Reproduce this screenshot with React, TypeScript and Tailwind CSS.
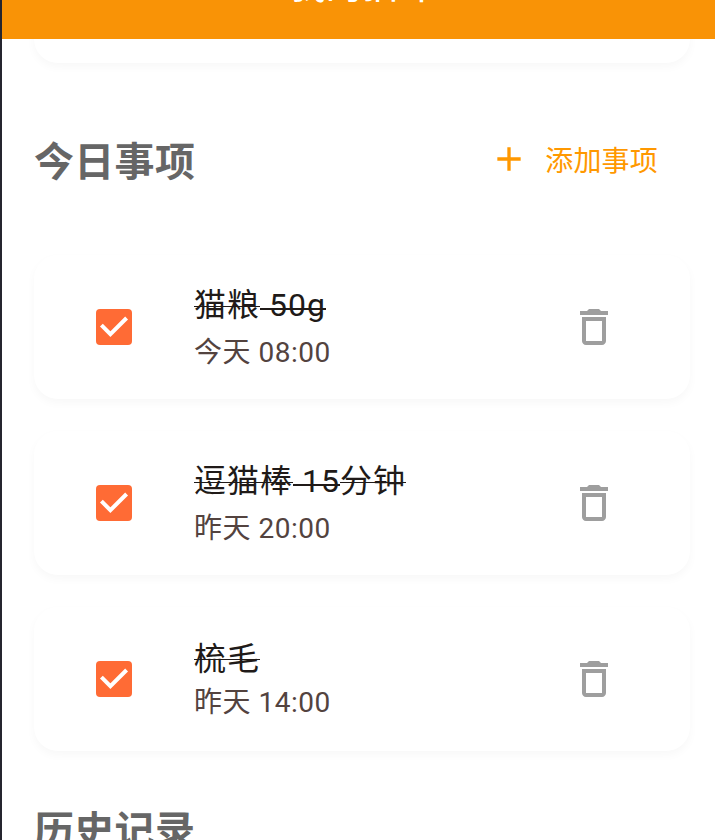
import { MdAdd, MdDeleteOutline } from "react-icons/md";

interface Part {
  text: string;
  latin?: boolean;
}

interface Task {
  title: Part[];
  time: string;
}

const tasks: Task[] = [
  { title: [{ text: "猫粮" }, { text: " 50g", latin: true }], time: "今天 08:00" },
  {
    title: [{ text: "逗猫棒" }, { text: " 15", latin: true }, { text: "分钟" }],
    time: "昨天 20:00",
  },
  { title: [{ text: "梳毛" }], time: "昨天 14:00" },
];

function Checkbox() {
  return (
    <div className="h-9 w-9 shrink-0 rounded-[4px] bg-[#ff6b35]">
      <svg width="36" height="36" viewBox="0 0 36 36" fill="none">
        <path d="M5.4 16.2L14.4 25.2L30.6 9" stroke="#fff" strokeWidth="4" />
      </svg>
    </div>
  );
}

function TaskCard({ task }: { task: Task }) {
  const mixed = task.title.some((part) => part.latin);

  // latin runs carry a thicker, slightly lower strike
  const strikeClass = (part: Part) => {
    if (part.latin) return "top-[27px] h-0.5";
    return mixed ? "top-[25px] h-px" : "top-[24px] h-px";
  };

  return (
    <div className="flex h-36 items-center rounded-3xl bg-white pr-[72px] pl-[62px] shadow-[0_4px_10px_rgba(0,0,0,0.03)]">
      <Checkbox />
      <div className="ml-[62px] h-24 flex-1 whitespace-pre">
        <div
          className={`h-12 text-[32px] leading-[48px] tracking-[1px] text-[#201a18] ${
            mixed ? "mt-0.5" : "mt-1"
          }`}
        >
          {task.title.map((part) => (
            <span key={part.text} className="relative inline-block">
              {part.text}
              <span className={`absolute left-0 w-full bg-[#201a18] ${strikeClass(part)}`} />
            </span>
          ))}
        </div>
        <div
          className={`text-[28px] leading-10 tracking-[0.5px] text-[#53433f] ${
            mixed ? "mt-1" : "mt-0"
          }`}
        >
          {task.time}
        </div>
      </div>
      <MdDeleteOutline size={48} className="shrink-0 text-[#9e9e9e]" />
    </div>
  );
}

export default function App() {
  return (
    <div className="flex h-[840px] flex-col overflow-hidden border-l-2 border-[#25252f] bg-white font-['Roboto','Noto_Sans_CJK_SC',sans-serif]">
      <header className="z-10 flex h-[39px] shrink-0 items-end justify-center overflow-hidden bg-[#f99306]">
        <h1 className="mb-[26px] ml-[7px] text-[36px] leading-[52px] font-medium text-white">我的猫咪</h1>
      </header>

      <main className="flex flex-col pr-[25px] pl-8">
        <div className="-mt-6 h-12 shrink-0 rounded-b-3xl bg-white shadow-[0_4px_10px_rgba(0,0,0,0.03)]" />

        <div className="mt-[68px] flex h-14 items-center justify-between pr-8">
          <h2 className="pt-2 text-[40px] leading-[56px] font-bold tracking-[0.3px] text-[#666666]">
            今日事项
          </h2>
          <button className="flex items-center gap-4 text-[28px] tracking-[0.2px] text-[#ff9800]">
            <MdAdd size={40} />
            <span className="pt-1.5">添加事项</span>
          </button>
        </div>

        <div className="mt-[68px] flex flex-col gap-8">
          {tasks.map((task) => (
            <TaskCard key={task.time} task={task} />
          ))}
        </div>

        <h2 className="mt-[53px] text-[40px] leading-[56px] font-bold tracking-[0.3px] text-[#666666]">
          历史记录
        </h2>
      </main>
    </div>
  );
}
